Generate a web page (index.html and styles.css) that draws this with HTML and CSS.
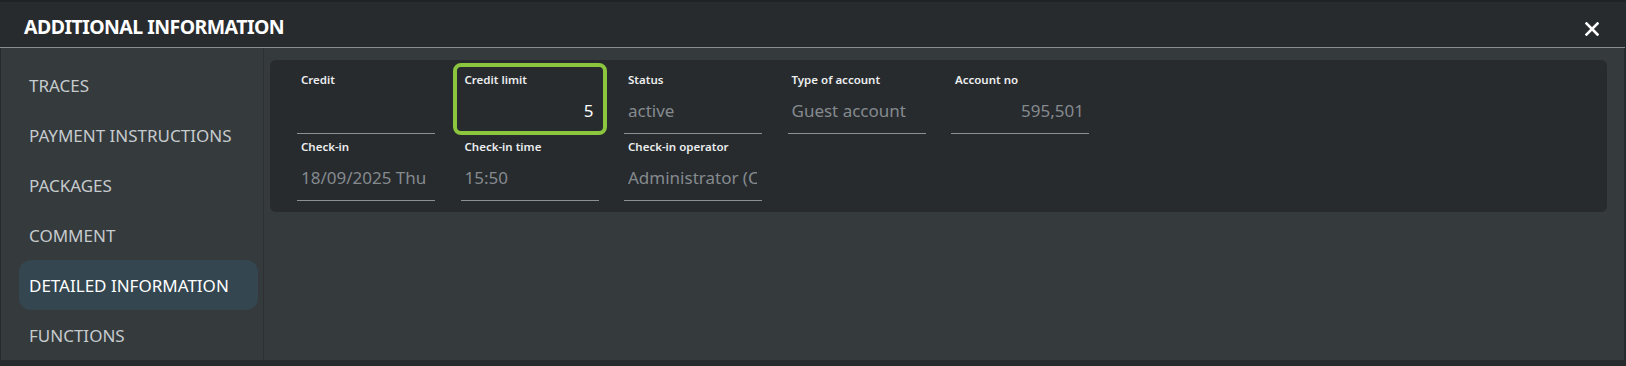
FILE: index.html
```html
<!DOCTYPE html>
<html lang="en">
<head>
<meta charset="utf-8">
<title>Additional information</title>
<link rel="stylesheet" href="styles.css">
</head>
<body>
<div class="dialog">
  <header class="header">
    <h1 class="title">ADDITIONAL INFORMATION</h1>
    <button class="close" aria-label="Close">
      <svg width="14" height="14" viewBox="0 0 14 14"><path d="M1.5 1.5 L12.5 12.5 M12.5 1.5 L1.5 12.5" stroke="#ffffff" stroke-width="2.6" stroke-linecap="square"/></svg>
    </button>
  </header>
  <div class="body">
    <nav class="sidebar">
      <div class="nav-item">TRACES</div>
      <div class="nav-item">PAYMENT INSTRUCTIONS</div>
      <div class="nav-item">PACKAGES</div>
      <div class="nav-item">COMMENT</div>
      <div class="nav-item active">DETAILED INFORMATION</div>
      <div class="nav-item">FUNCTIONS</div>
    </nav>
    <main class="main">
      <section class="card">
        <div class="field">
          <div class="label">Credit</div>
          <div class="value"></div>
        </div>
        <div class="field focused">
          <div class="label">Credit limit</div>
          <div class="value editable right">5</div>
        </div>
        <div class="field">
          <div class="label">Status</div>
          <div class="value">active</div>
        </div>
        <div class="field">
          <div class="label">Type of account</div>
          <div class="value">Guest account</div>
        </div>
        <div class="field">
          <div class="label">Account no</div>
          <div class="value right">595,501</div>
        </div>
        <div class="field">
          <div class="label">Check-in</div>
          <div class="value">18/09/2025 Thu</div>
        </div>
        <div class="field">
          <div class="label">Check-in time</div>
          <div class="value">15:50</div>
        </div>
        <div class="field">
          <div class="label">Check-in operator</div>
          <div class="value">Administrator (Check-in)</div>
        </div>
      </section>
    </main>
  </div>
</div>
</body>
</html>
```
FILE: styles.css
```css
* { box-sizing: border-box; }
html, body {
  margin: 0;
  padding: 0;
  background: #25292c;
}
body {
  font-family: "Noto Sans", "Open Sans", sans-serif;
  width: 1626px;
  height: 366px;
  overflow: hidden;
}
.dialog {
  height: 366px;
  display: flex;
  flex-direction: column;
  background: #272b2e;
  border-top: 2px solid #1f2325;
  padding-bottom: 6px;
}
.header {
  height: 46px;
  display: flex;
  align-items: center;
  justify-content: space-between;
  padding: 0 26px 0 24px;
  border-bottom: 1px solid #8a8e91;
  margin-right: 1px;
}
.title {
  margin: 0;
  font-size: 19.5px;
  font-weight: 700;
  color: #ffffff;
  letter-spacing: -0.55px;
  padding-top: 3px;
}
.close {
  background: none;
  border: 0;
  padding: 0;
  width: 14px;
  height: 14px;
  margin-top: 9px;
  display: flex;
}
.body {
  flex: 1;
  display: flex;
  background: #353a3d;
  margin: 0 2px 0 1px;
}
.sidebar {
  width: 263px;
  flex: none;
  border-right: 1px solid #2d3134;
  padding: 12px 5px 0 18px;
  display: flex;
  flex-direction: column;
}
.nav-item {
  height: 50px;
  display: flex;
  align-items: center;
  padding-left: 10px;
  font-size: 17px;
  color: #c6cbce;
  border-radius: 12px;
  white-space: nowrap;
}
.nav-item.active {
  background: #34464f;
  color: #ffffff;
}
.main {
  flex: 1;
  padding: 12px 17px 0 6px;
}
.card {
  background: #272b2e;
  border-radius: 6px;
  padding: 7px 0 11px 27px;
  display: grid;
  grid-template-columns: repeat(5, 138px);
  grid-auto-rows: 67px;
  column-gap: 25.5px;
}
.field {
  position: relative;
  padding: 5px 0 10px;
  border-bottom: 1px solid #8c9094;
}
.label {
  font-size: 11.5px;
  line-height: 16px;
  font-weight: 600;
  color: #eceeef;
  padding-left: 4px;
  white-space: nowrap;
}
.value {
  margin: 11px 5px 0 4px;
  font-size: 17px;
  line-height: 24px;
  color: #858a8e;
  white-space: nowrap;
  overflow: hidden;
  height: 24px;
}
.value.right { text-align: right; }
.value.editable { color: #ffffff; }
.field.focused { border-bottom-color: transparent; }
.field.focused::after {
  content: "";
  position: absolute;
  top: -4px;
  bottom: -2px;
  left: -8px;
  right: -8px;
  border: 4px solid #8cc63f;
  border-radius: 8px;
  pointer-events: none;
}
```
